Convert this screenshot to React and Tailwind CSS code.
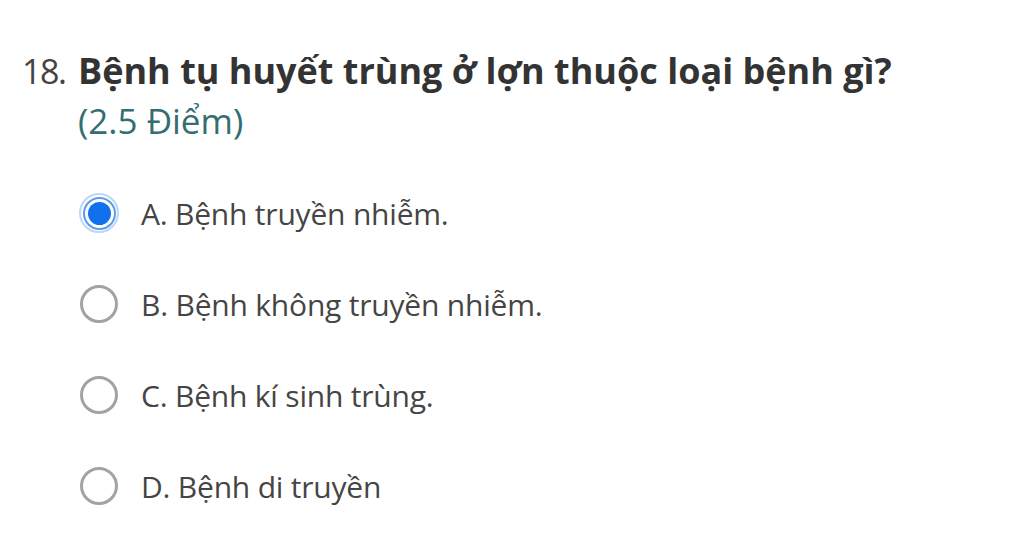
import React from "react";

const options = [
  { label: "A. Bệnh truyền nhiễm.", checked: true },
  { label: "B. Bệnh không truyền nhiễm.", checked: false },
  { label: "C. Bệnh kí sinh trùng.", checked: false },
  { label: "D. Bệnh di truyền", checked: false },
];

function Radio({ checked }) {
  if (checked) {
    return (
      <span className="flex h-[40px] w-[40px] shrink-0 items-center justify-center rounded-full border-[2px] border-[#bcd7f7] bg-white">
        <span className="flex h-[33px] w-[33px] items-center justify-center rounded-full border-[2px] border-[#5b9bef] bg-white">
          <span className="h-[23px] w-[23px] rounded-full bg-[#1170ec]" />
        </span>
      </span>
    );
  }
  return (
    <span className="flex h-[40px] w-[40px] shrink-0 items-center justify-center">
      <span className="h-[38px] w-[38px] rounded-full border-[3px] border-[#a3a3a3] bg-white" />
    </span>
  );
}

export default function App() {
  return (
    <div
      className="h-[549px] w-[1024px] overflow-hidden bg-white pl-[22px] pt-[46px]"
      style={{ fontFamily: '"Open Sans", "Noto Sans", sans-serif' }}
    >
      <div className="flex items-baseline">
        <span className="w-[56px] shrink-0 text-[34px] tracking-[-1.5px] text-[#444444]">18.</span>
        <div>
          <div className="text-[36px] font-bold leading-[48px] text-[#333333]">
            Bệnh tụ huyết trùng ở lợn thuộc loại bệnh gì?
          </div>
          <div className="mt-[3px] text-[35px] leading-[46px] text-[#336e70]">(2.5 Điểm)</div>
        </div>
      </div>
      <div className="mt-[49px] flex flex-col gap-[51px] pl-[57px]">
        {options.map((o) => (
          <div key={o.label} className="flex h-[40px] items-center gap-[22px]">
            <Radio checked={o.checked} />
            <span className="text-[30px] tracking-[-0.2px] text-[#454545]">{o.label}</span>
          </div>
        ))}
      </div>
    </div>
  );
}
